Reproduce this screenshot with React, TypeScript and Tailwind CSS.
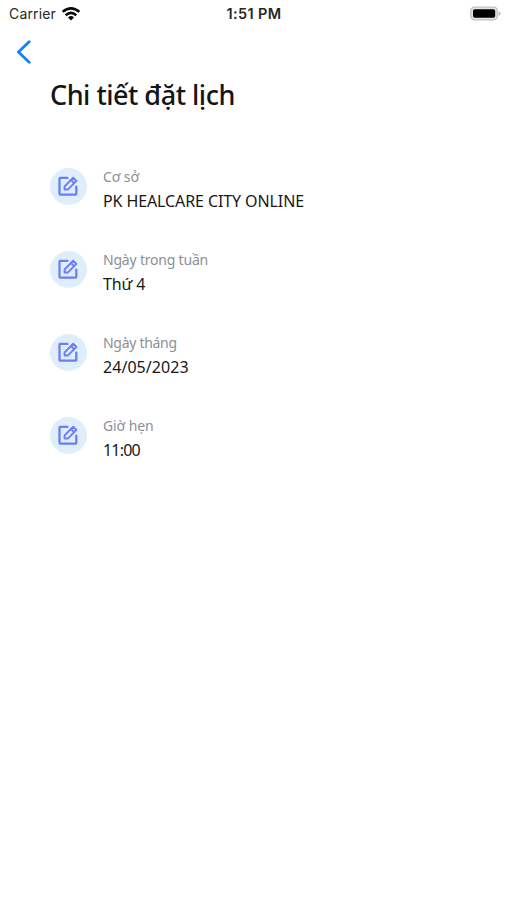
type Detail = { label: string; value: string; labelClass: string; valueClass: string };

const details: Detail[] = [
  { label: 'Cơ sở', value: 'PK HEALCARE CITY ONLINE', labelClass: 'tracking-[-0.1px]', valueClass: 'tracking-[-0.1px]' },
  { label: 'Ngày trong tuần', value: 'Thứ 4', labelClass: 'tracking-[-0.2px]', valueClass: 'tracking-[-0.1px]' },
  { label: 'Ngày tháng', value: '24/05/2023', labelClass: 'tracking-[-0.3px]', valueClass: 'tracking-[0.05px]' },
  { label: 'Giờ hẹn', value: '11:00', labelClass: 'tracking-[-0.1px]', valueClass: 'tracking-[-0.8px]' },
];

function EditIcon() {
  return (
    <svg className="-ml-px -mt-px" width="22" height="22" viewBox="0 0 22 22" fill="none" stroke="#6c7df8" strokeWidth="2.3" strokeLinejoin="round" strokeLinecap="round">
      <path d="M10.4 2.9H3.3Q2.5 2.9 2.5 3.7V18.8Q2.5 19.6 3.3 19.6H18.5Q19.3 19.6 19.3 18.8V11.6" />
      <path d="M7.6 14.6V11.4L16.2 2.7L19.4 5.9L10.8 14.6Z" strokeWidth="2" />
      <path d="M13.9 5L17.1 8.2" strokeWidth="1.9" />
    </svg>
  );
}

function StatusBar() {
  return (
    <header className="grid h-7 grid-cols-3 items-center pl-[9px] pr-[6px] font-['Inter','Liberation_Sans',sans-serif] text-[14px] text-[#262626]">
      <div className="flex items-center gap-[6px]">
        <span className="-mt-px tracking-[0.15px]">Carrier</span>
        <svg className="-mt-px" width="18" height="14" viewBox="0 0 18 14" fill="none" stroke="#050505" strokeWidth="2.5">
          <path d="M0.7 4.9Q9-2.1 17.3 4.9" />
          <path d="M3.7 8.2Q9 3.5 14.3 8.2" />
          <path d="M6 10.5Q9 7.7 12 10.5L9 13.6Z" fill="#050505" stroke="none" />
        </svg>
      </div>
      <span className="-ml-[2px] -mt-px text-center text-[14.5px] font-semibold tracking-[0.4px]">1:51 PM</span>
      <div className="flex items-center justify-end">
        <svg width="31" height="16" viewBox="0 0 31 16">
          <rect x="0.8" y="1.1" width="26.6" height="12.8" rx="3.8" fill="#e4e4e4" stroke="#c2c2c2" strokeWidth="1.4" />
          <rect x="3" y="3.2" width="22.2" height="8.6" rx="1.7" fill="#000" />
          <path d="M28.8 5.2Q32 7.5 28.8 9.8Z" fill="#aaa" />
        </svg>
      </div>
    </header>
  );
}

export default function App() {
  return (
    <main className="min-h-[900px] w-full bg-white font-['Noto_Sans','Open_Sans',sans-serif]">
      <StatusBar />
      <nav className="flex h-12 items-center pl-4">
        <button aria-label="Back" className="block">
          <svg width="16" height="24" viewBox="0 0 16 24" fill="none" stroke="#1380f5" strokeWidth="2.8" strokeLinecap="round" strokeLinejoin="round">
            <path d="M13.2 1.8L2.4 12L13.2 22.2" />
          </svg>
        </button>
      </nav>
      <section className="pl-[50px]">
        <h1 className="h-[38px] text-[27px] font-medium leading-[38px] tracking-[-0.5px] text-[#151515]">Chi tiết đặt lịch</h1>
        <div className="mt-[50px] flex flex-col gap-[35px]">
          {details.map((item) => (
            <div key={item.label} className="flex h-12 gap-4">
              <div className="mt-[3.5px] flex size-[37px] shrink-0 items-center justify-center rounded-full bg-[#dfeefb]">
                <EditIcon />
              </div>
              <div>
                <div className={`h-6 whitespace-nowrap text-[14px] leading-[25px] text-[#8d8f96] ${item.labelClass}`}>{item.label}</div>
                <div className={`h-6 whitespace-nowrap text-[16px] leading-[27px] text-[#181818] ${item.valueClass}`}>{item.value}</div>
              </div>
            </div>
          ))}
        </div>
      </section>
    </main>
  );
}
